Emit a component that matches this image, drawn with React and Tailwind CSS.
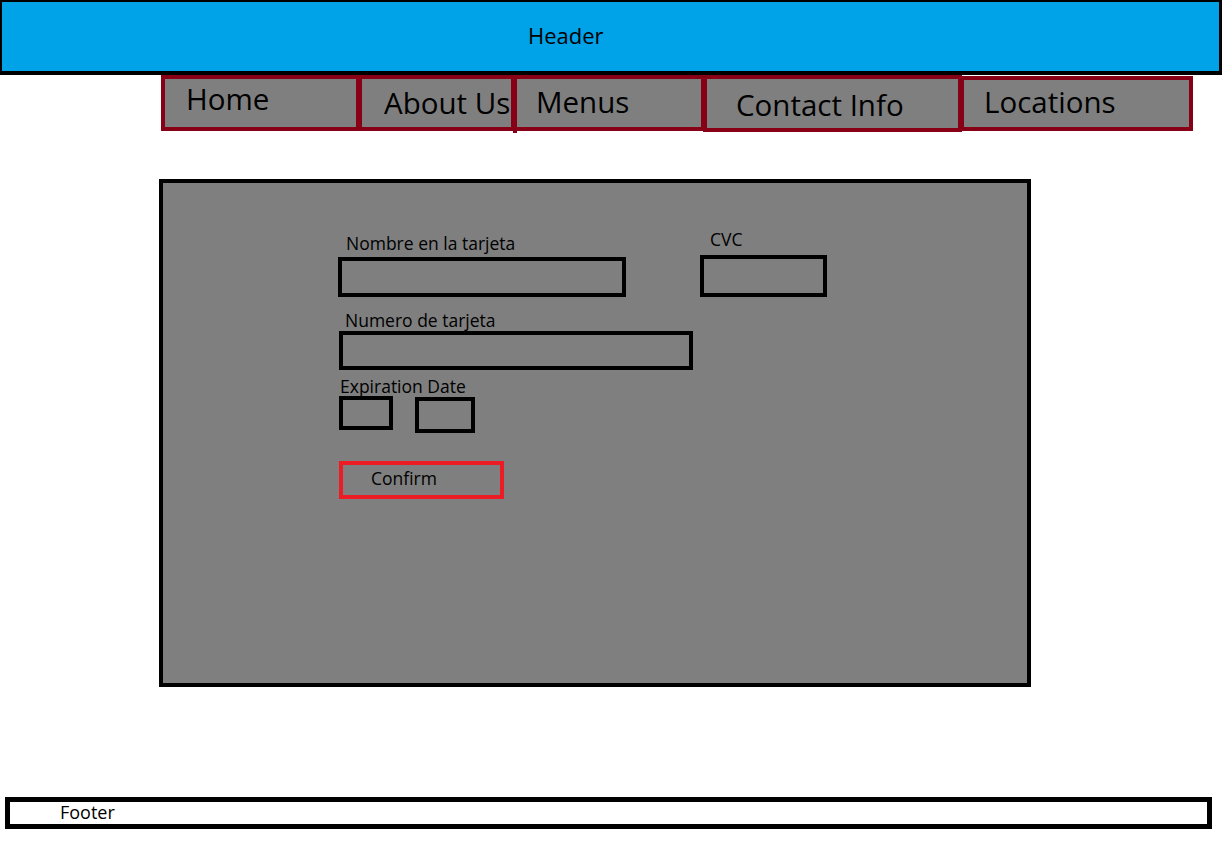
import React from 'react';

const navItems = [
    { label: 'Home', box: 'w-[199px] h-[56px]', text: 'pl-[21px] pt-[0px]' },
    { label: 'About Us', box: 'ml-[-2px] w-[157px] h-[56px]', text: 'pl-[22px] pt-[4px]' },
    { label: 'Menus', box: 'ml-[-2px] w-[192px] h-[56px]', text: 'pl-[19px] pt-[3px]', tail: true },
    { label: 'Contact Info', box: 'ml-[-2px] w-[259px] h-[57px]', text: 'pl-[29px] pt-[6px]' },
    { label: 'Locations', box: 'ml-[-2px] mt-[1px] w-[233px] h-[55px]', text: 'pl-[20px] pt-[2px]' },
];

export default function App() {
    return (
        <div className="w-[1223px] h-[848px] bg-white text-black overflow-hidden" style={{ fontFamily: '"Open Sans", "Noto Sans", sans-serif' }}>
            {/* header */}
            <div className="w-[1222px] h-[75px] bg-[#00a2e8] border-black border-t-2 border-l-2 border-r-[3px] border-b-4 flex items-center pl-[526px]">
                <span className="text-[22px] leading-none mb-[3px]">Header</span>
            </div>

            {/* nav */}
            <div className="flex items-start ml-[161px]">
                {navItems.map((item) => (
                    <div key={item.label} className={`relative shrink-0 bg-[#7f7f7f] border-4 border-[#880015] ${item.box}`}>
                        <div className={`text-[29.5px] leading-[40px] whitespace-nowrap ${item.text}`}>{item.label}</div>
                        {item.tail && <div className="absolute left-[-4px] top-full w-[4px] h-[6px] bg-[#880015]" />}
                    </div>
                ))}
            </div>

            {/* payment panel */}
            <div className="ml-[159px] mt-[47px] w-[872px] h-[508px] bg-[#7f7f7f] border-4 border-black pt-[50px] pl-[175px] text-[17.5px]">
                <div className="flex items-start">
                    <div>
                        <div className="ml-[8px] leading-[20px]">Nombre en la tarjeta</div>
                        <div className="mt-[4px] w-[288px] h-[40px] border-4 border-black" />
                    </div>
                    <div className="ml-[74px] mt-[-4px]">
                        <div className="ml-[10px] leading-[20px]">CVC</div>
                        <div className="mt-[6px] w-[127px] h-[42px] border-4 border-black" />
                    </div>
                </div>

                <div className="mt-[13px] ml-[7px] leading-[20px]">Numero de tarjeta</div>
                <div className="mt-[1px] ml-[1px] w-[354px] h-[39px] border-4 border-black" />

                <div className="mt-[6px] ml-[2px] leading-[20px]">Expiration Date</div>
                <div className="flex items-start ml-[1px]">
                    <div className="w-[54px] h-[34px] border-4 border-black" />
                    <div className="ml-[22px] mt-[1px] w-[60px] h-[36px] border-4 border-black" />
                </div>

                <button className="mt-[28px] ml-[1px] w-[165px] h-[38px] border-4 border-[#ed1c24] flex items-center pl-[28px] pb-[3px] text-[17.5px]">
                    Confirm
                </button>
            </div>

            {/* footer */}
            <div className="ml-[5px] mt-[110px] w-[1207px] h-[32px] border-[5px] border-black flex items-center pl-[50px]">
                <span className="text-[18px] leading-none mb-[3px]">Footer</span>
            </div>
        </div>
    );
}
